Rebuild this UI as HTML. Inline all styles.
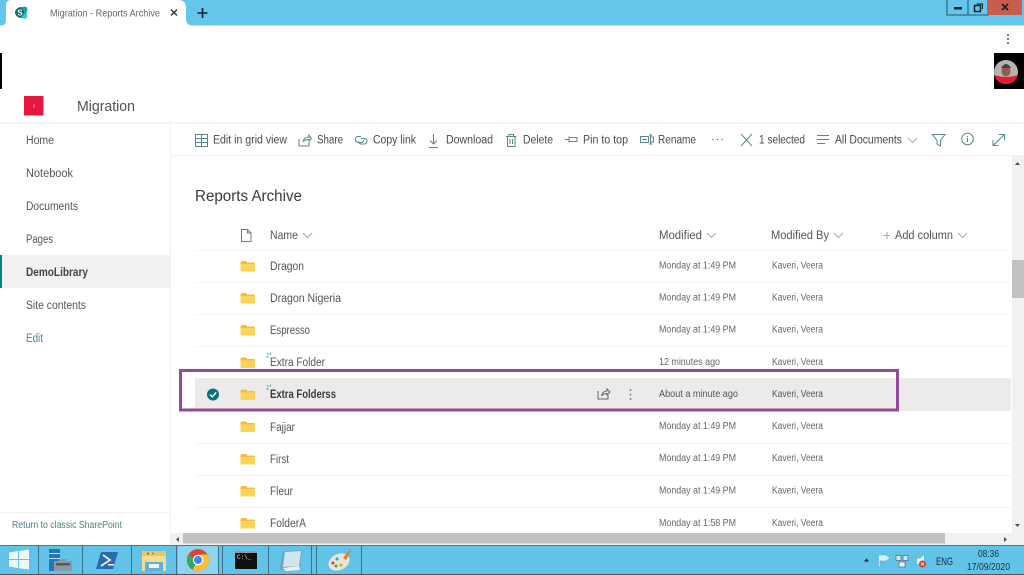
<!DOCTYPE html>
<html><head><meta charset="utf-8"><title>Migration - Reports Archive</title>
<style>
html,body{margin:0;padding:0;background:#fff;width:1024px;height:575px;overflow:hidden}
svg{display:block;position:absolute;left:0;top:0;filter:blur(.35px)}
text{font-family:"Liberation Sans",sans-serif;fill:#4a4a4a;font-size:11.5px}
.n{fill:#555}
.d{font-size:10px;fill:#666}
.ic{fill:none;stroke:#5a8788;stroke-width:1}
.g{fill:none;stroke:#777;stroke-width:1}
.c{fill:none;stroke:#aaa;stroke-width:1}
</style></head><body>
<svg width="1024" height="575" viewBox="0 0 1024 575" xmlns="http://www.w3.org/2000/svg">
<!-- title bar -->
<rect x="0" y="0" width="1024" height="25.500" fill="#63c6ea"/>
<path d="M0 25.500H1Q6 25.500 6 20V5Q6 0 11 0H178Q186 0 186 8V19Q186 25.500 193 25.500H0Z" fill="#fff"/>
<circle cx="21" cy="12.500" r="5.500" fill="#0f7f84"/><circle cx="24.500" cy="9.500" r="3" fill="#17a0a5"/><circle cx="24.500" cy="16" r="2.800" fill="#37c6d0"/>
<circle cx="19.500" cy="12.500" r="4.500" fill="#0b6a6e"/>
<text x="17.300" y="15.500" style="fill:#fff;font-size:8px;font-weight:bold">S</text>
<text x="50" y="16.500" textLength="110" lengthAdjust="spacingAndGlyphs" style="fill:#666;font-size:10.500px">Migration - Reports Archive</text>
<path d="M171 9.500L177 15.500M177 9.500L171 15.500" stroke="#333" stroke-width="1.400"/>
<path d="M202.500 8V18M197.500 13H207.500" stroke="#123" stroke-width="1.600"/>
<!-- window buttons -->
<rect x="947" y="-1" width="21" height="16" fill="#63c6ea" stroke="#1f5870"/>
<rect x="968" y="-1" width="20" height="16" fill="#63c6ea" stroke="#1f5870"/>
<rect x="988" y="0" width="34" height="15" fill="#c65e50"/>
<rect x="954" y="7" width="8" height="2.500" fill="#122"/>
<rect x="974.500" y="5.500" width="6" height="6" fill="none" stroke="#122" stroke-width="1.500"/><path d="M976.500 4H982.500V9" fill="none" stroke="#122"/>
<path d="M1002 4L1008 10M1008 4L1002 10" stroke="#222" stroke-width="1.700"/>
<!-- header -->
<g fill="#555"><circle cx="1008" cy="35" r="1"/><circle cx="1008" cy="39" r="1"/><circle cx="1008" cy="43" r="1"/></g>
<rect x="0" y="53" width="2" height="36" fill="#000"/>
<rect x="994" y="53" width="30" height="36" fill="#000"/>
<circle cx="1006" cy="72" r="12" fill="#b9b3b0"/>
<path d="M994.300 75Q1006 79 1017.700 75Q1015 84 1006 84Q997 84 994.300 75Z" fill="#ea1b30"/>
<ellipse cx="1006" cy="71" rx="4.500" ry="5.500" fill="#8a5f50"/>
<path d="M1001 68Q1006 60 1011 68Z" fill="#4a3f3f"/>
<rect x="24" y="96" width="19.500" height="19.500" fill="#e8173f"/>
<rect x="33.500" y="104" width="1" height="4" fill="#f7a"/>
<text x="77" y="111" textLength="58" lengthAdjust="spacingAndGlyphs" style="font-size:14.500px;fill:#505050">Migration</text>
<!-- layout lines -->
<rect x="0" y="122" width="1024" height="1.500" fill="#f0f0f0"/>
<rect x="170" y="122" width="1" height="423" fill="#f2f2f2"/>
<rect x="171" y="155" width="853" height="1" fill="#f2f2f2"/>
<!-- nav -->
<rect x="0" y="255" width="170" height="33" fill="#f3f2f1"/>
<rect x="0" y="255" width="2" height="33" fill="#038387"/>
<text x="26" y="144" textLength="28" lengthAdjust="spacingAndGlyphs" class="n">Home</text>
<text x="26" y="177" textLength="47" lengthAdjust="spacingAndGlyphs" class="n">Notebook</text>
<text x="26" y="210" textLength="52" lengthAdjust="spacingAndGlyphs" class="n">Documents</text>
<text x="26" y="243" textLength="27" lengthAdjust="spacingAndGlyphs" class="n">Pages</text>
<text x="26" y="276" textLength="62" lengthAdjust="spacingAndGlyphs" style="font-weight:bold;fill:#444">DemoLibrary</text>
<text x="26" y="309" textLength="60" lengthAdjust="spacingAndGlyphs" class="n">Site contents</text>
<text x="26" y="342" textLength="17" lengthAdjust="spacingAndGlyphs" style="fill:#3d8a90">Edit</text>
<rect x="0" y="512" width="170" height="1" fill="#f0f0f0"/>
<text x="12" y="528" textLength="110" lengthAdjust="spacingAndGlyphs" style="font-size:10px;fill:#4f7f80">Return to classic SharePoint</text>
<!-- toolbar -->
<g class="ic">
<path d="M195.500 134.500H207.500V146.500H195.500ZM195.500 138.500H207.500M195.500 142.500H207.500M201.500 134.500V146.500"/>
<path d="M299 139V146H309V142M303 142Q304 137 309 137V135L311.500 138.500L309 141V139.500Q305 139.500 303 142Z"/>
<path d="M361 136.500H358Q355.500 136.500 355.500 139.500Q355.500 142.500 358 142.500H361Q363.500 142.500 363.500 140M361 138.500H364Q367 138.500 367 141Q367 144 364 144H361Q359 144 359 141.500"/>
<path d="M433.500 134V144M430 140.500L433.500 144L437 140.500M429 147.500H438"/>
<path d="M506 136.500H516.500M509 136.500V134.500H513.500V136.500M507.500 136.500V146.500H515V136.500M510 139V144M512.500 139V144"/>
<path d="M565 139.500H569M569 136.500V142.500M569 137.500H577V141.500H569"/>
<path d="M640.500 136.500H648.500V142.500H640.500ZM642.500 139.500H647M650.500 135V144M649 135H652.500M649 144H652.500M651 137H653.500V142H651"/>
</g>
<g fill="#777"><circle cx="713" cy="139.500" r=".8"/><circle cx="717.500" cy="139.500" r=".8"/><circle cx="722" cy="139.500" r=".8"/></g>
<path d="M741 134L752 146M752 134L741 146" class="ic"/>
<path d="M817 135.500H829M817 139.500H829M817 143.500H825" class="ic"/>
<path d="M908 138L912.500 142.500L917 138" class="c"/>
<path d="M932.500 134.500H945L940.500 140.500V146L937 144V140.500Z" class="ic"/>
<circle cx="967.500" cy="139" r="5.800" class="ic"/><path d="M967.500 138V142M967.500 136V137" class="ic"/>
<path d="M993 145.500L1004.500 134.500M998.500 134.500H1004.500V140M993 140V145.500H998.500" class="ic"/>
<text x="213" y="143.500" textLength="74" lengthAdjust="spacingAndGlyphs">Edit in grid view</text>
<text x="317" y="143.500" textLength="26" lengthAdjust="spacingAndGlyphs">Share</text>
<text x="373" y="143.500" textLength="43" lengthAdjust="spacingAndGlyphs">Copy link</text>
<text x="446" y="143.500" textLength="47" lengthAdjust="spacingAndGlyphs">Download</text>
<text x="523" y="143.500" textLength="30" lengthAdjust="spacingAndGlyphs">Delete</text>
<text x="583" y="143.500" textLength="45" lengthAdjust="spacingAndGlyphs">Pin to top</text>
<text x="658" y="143.500" textLength="38" lengthAdjust="spacingAndGlyphs">Rename</text>
<text x="759" y="143.500" textLength="46" lengthAdjust="spacingAndGlyphs">1 selected</text>
<text x="835" y="143.500" textLength="67" lengthAdjust="spacingAndGlyphs">All Documents</text>
<!-- title -->
<text x="195" y="201" textLength="107" lengthAdjust="spacingAndGlyphs" style="font-size:15.500px;fill:#3a3a3a">Reports Archive</text>
<!-- headers -->
<path d="M241.500 229.500H247.500L251 233V241.500H241.500ZM247.500 229.500V233H251" class="g"/>
<text x="270" y="239" textLength="28" lengthAdjust="spacingAndGlyphs" style="fill:#555">Name</text>
<path d="M303 233L307.500 237.500L312 233" class="c"/>
<text x="659" y="239" textLength="43" lengthAdjust="spacingAndGlyphs" style="fill:#555">Modified</text>
<path d="M707 233L711.500 237.500L716 233" class="c"/>
<text x="771" y="239" textLength="58" lengthAdjust="spacingAndGlyphs" style="fill:#555">Modified By</text>
<path d="M834 233L838.500 237.500L843 233" class="c"/>
<path d="M883.500 235.500H890.500M887 232V239" class="c"/>
<text x="895" y="239" textLength="58" lengthAdjust="spacingAndGlyphs" style="fill:#555">Add column</text>
<path d="M958 233L962.500 237.500L967 233" class="c"/>
<!-- row separators -->
<g fill="#f4f3f2">
<rect x="195" y="250" width="816" height="1"/><rect x="195" y="282" width="816" height="1"/>
<rect x="195" y="314" width="816" height="1"/><rect x="195" y="346" width="816" height="1"/>
<rect x="195" y="443" width="816" height="1"/><rect x="195" y="475" width="816" height="1"/>
<rect x="195" y="507" width="816" height="1"/>
</g>
<rect x="195" y="378" width="816" height="33" fill="#edebe9"/>
<!-- folders -->
<defs><g id="fo"><path d="M0 1.500Q0 0 1.500 0H5.500L7 1.500H13.500Q14.500 1.500 14.500 3V10.500H0Z" fill="#f3bf35"/><rect x="0" y="3" width="14.500" height="7.500" fill="#fdd45a"/></g></defs>
<use href="#fo" x="240.500" y="261"/><use href="#fo" x="240.500" y="293"/><use href="#fo" x="240.500" y="325"/>
<use href="#fo" x="240.500" y="357.500"/><use href="#fo" x="240.500" y="389.500"/><use href="#fo" x="240.500" y="421.500"/>
<use href="#fo" x="240.500" y="454"/><use href="#fo" x="240.500" y="486"/><use href="#fo" x="240.500" y="518"/>
<path d="M266 357H269M270 355L271 352.500M268.500 355L267 353" stroke="#3d8a90" fill="none" stroke-width=".8"/>
<path d="M266 389H269M270 387L271 384.500M268.500 387L267 385" stroke="#3d8a90" fill="none" stroke-width=".8"/>
<!-- names -->
<text x="270" y="270" textLength="34" lengthAdjust="spacingAndGlyphs" class="n">Dragon</text>
<text x="270" y="302" textLength="71" lengthAdjust="spacingAndGlyphs" class="n">Dragon Nigeria</text>
<text x="270" y="334" textLength="40" lengthAdjust="spacingAndGlyphs" class="n">Espresso</text>
<text x="270" y="366" textLength="55" lengthAdjust="spacingAndGlyphs" class="n">Extra Folder</text>
<text x="270" y="398" textLength="66" lengthAdjust="spacingAndGlyphs" style="font-weight:bold;fill:#3c3c3c">Extra Folderss</text>
<text x="270" y="431" textLength="25" lengthAdjust="spacingAndGlyphs" class="n">Fajjar</text>
<text x="270" y="463" textLength="19" lengthAdjust="spacingAndGlyphs" class="n">First</text>
<text x="270" y="495" textLength="23" lengthAdjust="spacingAndGlyphs" class="n">Fleur</text>
<text x="270" y="527" textLength="36" lengthAdjust="spacingAndGlyphs" class="n">FolderA</text>
<!-- dates -->
<text x="659" y="268.500" textLength="77" lengthAdjust="spacingAndGlyphs" class="d">Monday at 1:49 PM</text>
<text x="659" y="300.500" textLength="77" lengthAdjust="spacingAndGlyphs" class="d">Monday at 1:49 PM</text>
<text x="659" y="332.500" textLength="77" lengthAdjust="spacingAndGlyphs" class="d">Monday at 1:49 PM</text>
<text x="659" y="365" textLength="61" lengthAdjust="spacingAndGlyphs" class="d">12 minutes ago</text>
<text x="659" y="397" textLength="79" lengthAdjust="spacingAndGlyphs" class="d" style="fill:#555">About a minute ago</text>
<text x="659" y="429" textLength="77" lengthAdjust="spacingAndGlyphs" class="d">Monday at 1:49 PM</text>
<text x="659" y="461" textLength="77" lengthAdjust="spacingAndGlyphs" class="d">Monday at 1:49 PM</text>
<text x="659" y="493.500" textLength="77" lengthAdjust="spacingAndGlyphs" class="d">Monday at 1:49 PM</text>
<text x="659" y="526" textLength="77" lengthAdjust="spacingAndGlyphs" class="d">Monday at 1:58 PM</text>
<!-- authors -->
<text x="772" y="268.500" textLength="51" lengthAdjust="spacingAndGlyphs" class="d">Kaveri, Veera</text>
<text x="772" y="300.500" textLength="51" lengthAdjust="spacingAndGlyphs" class="d">Kaveri, Veera</text>
<text x="772" y="332.500" textLength="51" lengthAdjust="spacingAndGlyphs" class="d">Kaveri, Veera</text>
<text x="772" y="365" textLength="51" lengthAdjust="spacingAndGlyphs" class="d">Kaveri, Veera</text>
<text x="772" y="397" textLength="51" lengthAdjust="spacingAndGlyphs" class="d" style="fill:#555">Kaveri, Veera</text>
<text x="772" y="429" textLength="51" lengthAdjust="spacingAndGlyphs" class="d">Kaveri, Veera</text>
<text x="772" y="461" textLength="51" lengthAdjust="spacingAndGlyphs" class="d">Kaveri, Veera</text>
<text x="772" y="493.500" textLength="51" lengthAdjust="spacingAndGlyphs" class="d">Kaveri, Veera</text>
<text x="772" y="526" textLength="51" lengthAdjust="spacingAndGlyphs" class="d">Kaveri, Veera</text>
<!-- selected row extras -->
<circle cx="213" cy="394.500" r="6" fill="#07737a"/>
<path d="M210 394.500L212.300 396.800L216.200 392.500" fill="none" stroke="#fff" stroke-width="1.400"/>
<path d="M598 391V399H608V395M601.500 396Q602.500 391 607 391V389L610 392L607 395V393.500Q603.500 393.500 601.500 396Z" fill="none" stroke="#666"/>
<g fill="#666"><circle cx="630.500" cy="390" r=".9"/><circle cx="630.500" cy="394.500" r=".9"/><circle cx="630.500" cy="399" r=".9"/></g>
<!-- purple box -->
<rect x="180.500" y="370.500" width="717" height="39.500" fill="none" stroke="#95499b" stroke-width="3"/>
<!-- scrollbars -->
<rect x="1012" y="156" width="12" height="389" fill="#f1f1f1"/>
<rect x="1012" y="260" width="12" height="38" fill="#c1c1c1"/>
<path d="M1015 165L1017.500 162L1020 165Z M1015 524L1017.500 527L1020 524Z" fill="#505050"/>
<rect x="171" y="533" width="841" height="12" fill="#f1f1f1"/>
<rect x="183" y="533" width="762" height="10.500" fill="#c1c1c1"/>
<path d="M179 537L176 539.500L179 542Z M1004 537L1007 539.500L1004 542Z" fill="#505050"/>
<!-- taskbar -->
<rect x="0" y="545" width="1024" height="30" fill="#62c3e8"/>
<rect x="0" y="545" width="1024" height="1" fill="#3e7f99"/>
<rect x="0" y="574" width="1024" height="1" fill="#2f5f72"/>
<rect x="178" y="546" width="40" height="28" fill="#8fd4ee"/>
<g fill="#3a7088">
<rect x="38" y="546" width="1" height="28"/><rect x="82" y="546" width="1" height="28"/><rect x="131" y="546" width="1" height="28"/><rect x="176" y="546" width="1" height="28"/>
<rect x="218" y="546" width="1" height="28"/><rect x="222" y="546" width="1" height="28"/><rect x="268" y="546" width="1" height="28"/><rect x="311" y="546" width="1" height="28"/><rect x="316" y="546" width="1" height="28"/><rect x="361" y="546" width="1" height="28"/>
</g>
<!-- start -->
<path d="M9 552.500L18 551V559H9ZM19 551L29 549.500V559H19ZM9 560H18V568L9 566.500ZM19 560H29V569.500L19 568.200Z" fill="#eef8fc"/>
<!-- server mgr -->
<rect x="49" y="549" width="11" height="22" fill="#1f78b8"/><rect x="49" y="553" width="11" height="1" fill="#bfe4f5"/><rect x="49" y="558" width="11" height="1" fill="#bfe4f5"/>
<rect x="54" y="561" width="18" height="10" fill="#8a9aa3"/><rect x="56" y="563" width="14" height="2.500" fill="#4f5b63"/><rect x="59" y="559" width="8" height="2" fill="#8a9aa3"/>
<!-- powershell -->
<path d="M101 552H118L113 569H96Z" fill="#2a6bb0"/><path d="M103 555L110 560L101 566" fill="none" stroke="#e9f4fb" stroke-width="1.800"/><rect x="108" y="564" width="6" height="1.500" fill="#e9f4fb"/>
<!-- explorer -->
<rect x="142" y="551" width="24" height="20" rx="1" fill="#f3dd92"/><rect x="142" y="551" width="24" height="5" fill="#e9c763"/><rect x="145" y="562" width="18" height="9" fill="#5fb2d8"/><rect x="149" y="564" width="10" height="4" fill="#f3f3e6"/>
<circle cx="148" cy="553.500" r="1" fill="#b33"/><circle cx="153" cy="553.500" r="1" fill="#4a4"/>
<!-- chrome -->
<circle cx="198" cy="560" r="11" fill="#db4437"/>
<path d="M198 560L192.500 569.500A11 11 0 0 0 207.500 554.500L198 554.500Z" fill="#fbc02d"/>
<path d="M198 560L192.500 569.500L196 571A11 11 0 0 1 188.500 554.500Z" fill="#3aa757"/>
<circle cx="198" cy="560" r="5.200" fill="#fff"/><circle cx="198" cy="560" r="4" fill="#4285f4"/>
<!-- cmd -->
<rect x="235" y="551" width="22" height="18" fill="#111"/><rect x="235" y="551" width="22" height="2" fill="#999"/>
<text x="237" y="559" style="fill:#ddd;font-size:6px;font-family:'Liberation Mono',monospace">C:\_</text>
<!-- notepad -->
<path d="M283 551L302 550L300 568L279 570Z" fill="#6ea9c4"/><path d="M285 552L301 551L299 566L283 567Z" fill="#cfe6ef"/><path d="M283 568L299 566L300 570L286 571Z" fill="#eee"/>
<!-- paint -->
<ellipse cx="339" cy="562" rx="11" ry="8" fill="#e8e4d8" transform="rotate(-25 339 562)"/>
<path d="M343 558L350 549L351 551L346 560Z" fill="#c98a3f"/>
<circle cx="333" cy="563" r="1.500" fill="#d33"/><circle cx="337" cy="559" r="1.500" fill="#39c"/><circle cx="336" cy="566" r="1.500" fill="#4a4"/><circle cx="341" cy="565" r="1.500" fill="#ca3"/>
<!-- tray -->
<path d="M864 561.500L866.500 558.500L869 561.500Z" fill="#123"/>
<path d="M878.500 555H886L890 558L886 561H880V567H878.500Z" fill="#d9eff8" stroke="#6b9fb5" stroke-width=".5"/>
<rect x="896" y="555.500" width="5" height="5" fill="#cfe8f2" stroke="#456" stroke-width=".6"/><rect x="903" y="555.500" width="5" height="5" fill="#cfe8f2" stroke="#456" stroke-width=".6"/><rect x="899" y="562" width="6" height="5" fill="#eef" stroke="#456" stroke-width=".6"/>
<path d="M917 558.500H920L924 555V568L920 564H917Z" fill="#e4f1f6"/>
<circle cx="922.500" cy="564" r="3.500" fill="#d5402f"/><path d="M921 562.500L924 565.500M924 562.500L921 565.500" stroke="#fff" stroke-width=".8"/>
<text x="936" y="565" textLength="17" lengthAdjust="spacingAndGlyphs" style="font-size:11px;fill:#14323f">ENG</text>
<text x="978" y="557" textLength="21" lengthAdjust="spacingAndGlyphs" style="font-size:10.500px;fill:#14323f">08:36</text>
<text x="967" y="570" textLength="43" lengthAdjust="spacingAndGlyphs" style="font-size:10.500px;fill:#14323f">17/09/2020</text>
</svg>
</body></html>
